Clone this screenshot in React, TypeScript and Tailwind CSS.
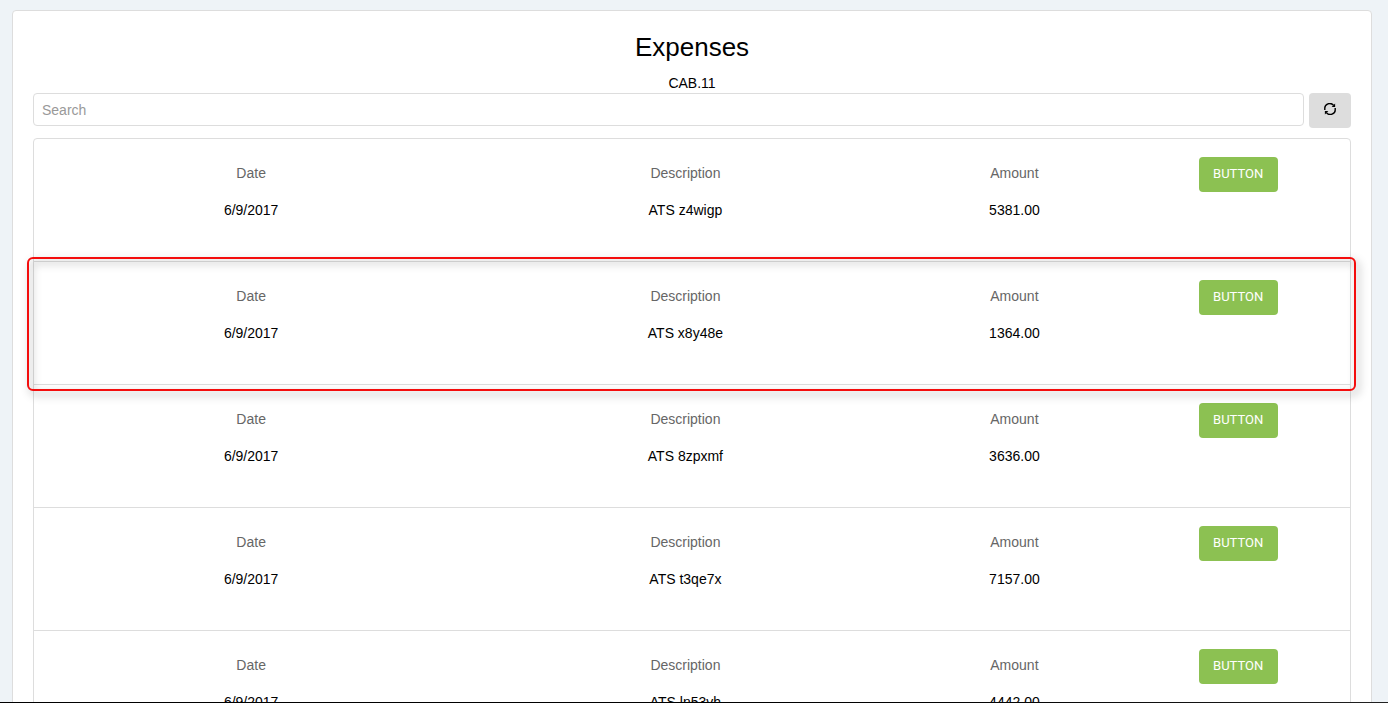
type Expense = {
  date: string;
  description: string;
  amount: string;
  highlighted?: boolean;
};

const expenses: Expense[] = [
  { date: "6/9/2017", description: "ATS z4wigp", amount: "5381.00" },
  { date: "6/9/2017", description: "ATS x8y48e", amount: "1364.00", highlighted: true },
  { date: "6/9/2017", description: "ATS 8zpxmf", amount: "3636.00" },
  { date: "6/9/2017", description: "ATS t3qe7x", amount: "7157.00" },
  { date: "6/9/2017", description: "ATS ln53vh", amount: "4442.00" },
];

function RefreshIcon() {
  return (
    <svg viewBox="0 0 12 12" className="size-3" fill="none" stroke="currentColor" strokeWidth="1.4" aria-hidden="true">
      <path d="M0.8 7V5.6A4.9 4.7 0 0 1 9.6 2.4" />
      <path d="M11.2 5V6.4A4.9 4.7 0 0 1 2.4 9.6" />
      <path d="M11.1 0.6V4.1H7.6Z" fill="currentColor" stroke="none" />
      <path d="M0.9 11.4V7.9H4.4Z" fill="currentColor" stroke="none" />
    </svg>
  );
}

function Field({ label, value }: { label: string; value: string }) {
  return (
    <dl className="pt-6 text-center">
      <dt className="text-[#666666]">{label}</dt>
      <dd className="mt-[17px] text-black">{value}</dd>
    </dl>
  );
}

function ExpenseRow({ expense }: { expense: Expense }) {
  return (
    <li className="relative grid grid-cols-[33fr_33fr_17fr_17fr] pb-[41px]">
      <Field label="Date" value={expense.date} />
      <Field label="Description" value={expense.description} />
      <Field label="Amount" value={expense.amount} />
      <div className="flex items-start justify-center pt-[18px]">
        <button
          type="button"
          className="h-[35px] w-[79px] rounded bg-[#8cc152] pb-0.5 font-['Roboto',sans-serif] text-[13px] text-white"
        >
          BUTTON
        </button>
      </div>
      {expense.highlighted && (
        <div className="pointer-events-none absolute -top-[5px] -right-1.5 -bottom-[7px] -left-[7px] z-10 rounded-md border-2 border-[#f40d0d] drop-shadow-[3px_4px_4px_rgba(0,0,0,0.4)]" />
      )}
    </li>
  );
}

export default function App() {
  return (
    <div className="h-screen overflow-hidden bg-[#eef3f7] pt-2.5 pr-4 pl-3 font-['Liberation_Sans',Arial,sans-serif] text-sm leading-5 text-black">
      <main className="rounded border border-[#dddddd] bg-white px-5 pt-5 pb-5">
        <header className="text-center">
          <h1 className="text-[26px] leading-8">Expenses</h1>
          <p className="mt-2.5 h-5">CAB.11</p>
        </header>
        <div className="flex gap-[5px]">
          <input
            type="search"
            aria-label="Search"
            placeholder="Search"
            className="h-[33px] min-w-0 flex-1 rounded border border-[#dddddd] bg-white px-2 outline-none placeholder:text-[#999999]"
          />
          <button
            type="button"
            aria-label="Refresh"
            className="flex h-[35px] w-[42px] items-center justify-center rounded bg-[#dddddd] pb-1 text-black"
          >
            <RefreshIcon />
          </button>
        </div>
        <ul className="mt-2.5 divide-y divide-[#dddddd] rounded border border-[#dddddd]">
          {expenses.map((expense) => (
            <ExpenseRow key={expense.description} expense={expense} />
          ))}
        </ul>
      </main>
      <div className="fixed inset-x-0 bottom-0 h-px bg-linear-to-r from-black via-black to-[#222222]" />
    </div>
  );
}
